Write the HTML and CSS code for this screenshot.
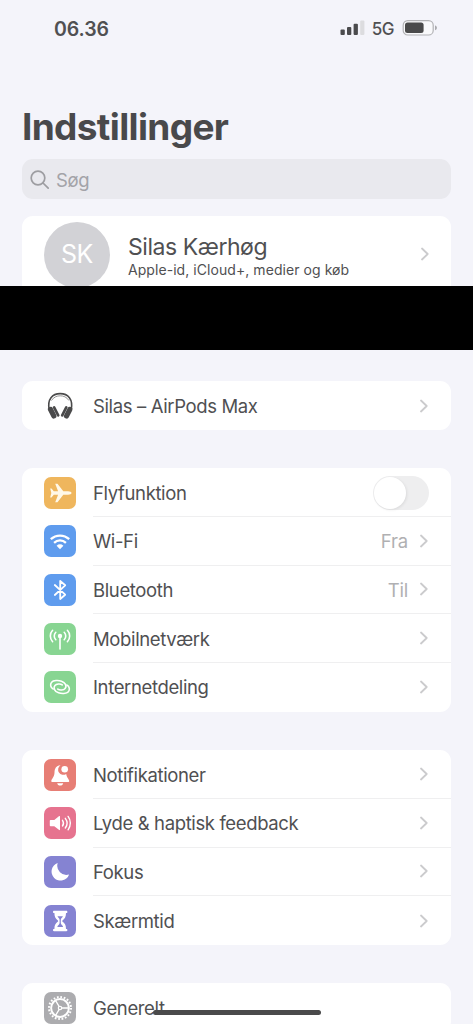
FILE: index.html
```html
<!DOCTYPE html>
<html lang="da">
<head>
<meta charset="utf-8">
<title>Indstillinger</title>
<link rel="stylesheet" href="styles.css">
</head>
<body>
<svg class="defs" width="0" height="0">
  <symbol id="chevron" viewBox="0 0 8 14"><path d="M1 1.500l5.700 5.500L1 12.500" fill="none" stroke="currentColor" stroke-width="1.800" stroke-linecap="round" stroke-linejoin="round"/></symbol>
</svg>
<div class="phone">
  <header class="status">
    <span class="time">06.36</span>
    <div class="indicators">
      <svg class="signal" viewBox="0 0 25 16" width="25" height="16">
        <g fill="#4b4b4d"><rect x="0.500" y="9.500" width="4.300" height="5.500" rx="1"/><rect x="7" y="7" width="4.300" height="8" rx="1"/><rect x="13.600" y="3.800" width="4.300" height="11.200" rx="1"/></g>
        <rect x="20.200" y="0.500" width="4.200" height="14.500" rx="1" fill="#dcdcdf"/>
      </svg>
      <span class="net">5G</span>
      <svg class="battery" viewBox="0 0 36 18" width="36" height="18">
        <rect x="1.200" y="1.600" width="30" height="14.400" rx="4.600" fill="#f9f9fb" stroke="#b2b2b5" stroke-width="1.200"/>
        <rect x="3" y="3.500" width="18.600" height="10.600" rx="2.500" fill="#4a4a4b"/>
        <path d="M33 6.400c1.400.4 1.900 1.200 1.900 2.400s-.5 2-1.900 2.400z" fill="#aaaaad"/>
      </svg>
    </div>
  </header>

  <h1 class="title">Indstillinger</h1>

  <div class="search">
    <svg viewBox="0 0 20 20" width="20" height="20" fill="none" stroke="#9d9da1" stroke-width="1.700" stroke-linecap="round"><circle cx="8" cy="8" r="6.800"/><path d="M13 13l5.200 5.200"/></svg>
    <span>Søg</span>
  </div>

  <section class="profile">
    <div class="avatar">SK</div>
    <div class="who">
      <div class="name">Silas Kærhøg</div>
      <div class="detail">Apple-id, iCloud+, medier og køb</div>
    </div>
    <svg class="chev"><use href="#chevron"/></svg>
  </section>
  <div class="redacted"></div>

  <section class="card airpods">
    <div class="row">
      <svg class="icon" viewBox="0 0 32 32">
        <path d="M5.200 20C3 9 8.500 3.600 16.200 3.600S29.400 9 27.200 20" fill="none" stroke="#4a4a4b" stroke-width="1.600"/>
        <path d="M7.500 10.500C9.700 7 13 5.800 16.200 5.800s6.500 1.200 8.700 4.700" fill="none" stroke="#888" stroke-width=".9"/>
        <g fill="#4a4a4b"><rect x="5.600" y="16.500" width="5.200" height="12.400" rx="2.400" transform="rotate(-27 8.200 22.700)"/><rect x="10.800" y="15.700" width="2.700" height="11.600" rx="1.300" transform="rotate(-27 12.100 21.500)"/><rect x="21.600" y="16.500" width="5.200" height="12.400" rx="2.400" transform="rotate(27 24.200 22.700)"/><rect x="18.900" y="15.700" width="2.700" height="11.600" rx="1.300" transform="rotate(27 20.300 21.500)"/></g>
      </svg>
      <div class="cell"><span class="label">Silas – AirPods Max</span><svg class="chev"><use href="#chevron"/></svg></div>
    </div>
  </section>

  <section class="card network">
    <div class="row">
      <svg class="icon orange" viewBox="0 0 32 32"><path d="M27.500 16c0-1-1.500-1.700-3.500-1.700h-4.700L13.500 6.700h-2.300l2.900 7.600H9.800L7.500 11.600H6.200L7.300 16 6.200 20.400h1.300l2.300-2.700h4.300l-2.900 7.600h2.300l5.800-7.600H24c2 0 3.500-.7 3.500-1.700z" fill="#fff8e8"/></svg>
      <div class="cell"><span class="label">Flyfunktion</span><span class="toggle"></span></div>
    </div>
    <div class="row">
      <svg class="icon blue" viewBox="0 0 32 32"><g fill="none" stroke="#fff" stroke-width="2.300"><path d="M6.800 14.200a13.400 13.400 0 0 1 18.400 0"/><path d="M10.100 17.800a8.600 8.600 0 0 1 11.800 0"/></g><path d="M16 24.200l-3.400-3.500a4.900 4.900 0 0 1 6.800 0z" fill="#fff"/></svg>
      <div class="cell"><span class="label">Wi-Fi</span><span class="value">Fra</span><svg class="chev"><use href="#chevron"/></svg></div>
    </div>
    <div class="row">
      <svg class="icon blue" viewBox="0 0 32 32"><path d="M10.800 11l10.400 9.700-5 4.300V7l5 4.300L10.800 21" fill="none" stroke="#fff" stroke-width="1.800" stroke-linejoin="round" stroke-linecap="round"/></svg>
      <div class="cell"><span class="label">Bluetooth</span><span class="value">Til</span><svg class="chev"><use href="#chevron"/></svg></div>
    </div>
    <div class="row">
      <svg class="icon green" viewBox="0 0 32 32"><g fill="none" stroke="#fff" stroke-width="1.600" stroke-linecap="round"><path d="M16 14v12"/><path d="M11.800 9.300a5.200 5.200 0 0 0 0 7.400M20.200 9.300a5.200 5.200 0 0 1 0 7.400M8.600 7.300a8.300 8.300 0 0 0 0 11.400M23.400 7.300a8.300 8.300 0 0 1 0 11.400"/></g><circle cx="16" cy="13" r="2.200" fill="#fff"/></svg>
      <div class="cell"><span class="label">Mobilnetværk</span><svg class="chev"><use href="#chevron"/></svg></div>
    </div>
    <div class="row">
      <svg class="icon green" viewBox="0 0 32 32"><g fill="none" stroke="#fff" stroke-width="1.600" stroke-linecap="round"><path d="M9.200 18C6.300 16.800 6 13 7.600 11.200 9.300 9.200 14.500 9.200 17.500 10.200c4 1.300 5.500 5 3.600 7.200-1.500 1.800-5.300 2.300-7.300.7"/><path d="M22.800 14c2.900 1.200 3.200 5 1.600 6.800-1.700 2-6.900 2-9.900 1-4-1.300-5.500-5-3.600-7.200 1.500-1.800 5.300-2.300 7.300-.7"/></g></svg>
      <div class="cell"><span class="label">Internetdeling</span><svg class="chev"><use href="#chevron"/></svg></div>
    </div>
  </section>

  <section class="card alerts">
    <div class="row">
      <svg class="icon red" viewBox="0 0 32 32"><path d="M16.500 6.200C12 6.600 10.600 9.700 10.500 13.500c-.1 4.500-2.800 6-3.200 8.500-.1.600.2.900.8.900h16.300c.6 0 .9-.3.800-.9-.4-2.300-2.500-3.300-3-7a5 5 0 0 1-5.700-8.800z" fill="#fff"/><path d="M13.200 24.200h6c-.3 1.500-1.500 2.400-3 2.400s-2.700-.9-3-2.400z" fill="#fff"/><circle cx="20.700" cy="10.200" r="3.300" fill="#fff"/></svg>
      <div class="cell"><span class="label">Notifikationer</span><svg class="chev"><use href="#chevron"/></svg></div>
    </div>
    <div class="row">
      <svg class="icon pink" viewBox="0 0 32 32"><path d="M6.800 13h3.500l4.900-3.900c.4-.3.800 0 .8.500v13c0 .5-.4.800-.8.500L10.300 19.300H6.800c-.6 0-1-.4-1-1V14c0-.6.400-1 1-1z" fill="#fff"/><g fill="none" stroke="#fff" stroke-width="1.400" stroke-linecap="round"><path d="M18.500 13.300a5 5 0 0 1 0 5.700"/><path d="M21.300 11.300a8 8 0 0 1 0 9.700"/><path d="M24.100 9.400a11.200 11.200 0 0 1 0 13.400"/></g></svg>
      <div class="cell"><span class="label">Lyde &amp; haptisk feedback</span><svg class="chev"><use href="#chevron"/></svg></div>
    </div>
    <div class="row">
      <svg class="icon purple" viewBox="0 0 32 32"><path d="M13.700 7a9 9 0 1 0 11.400 11.400A9.100 9.100 0 0 1 13.700 7z" fill="#fff"/></svg>
      <div class="cell"><span class="label">Fokus</span><svg class="chev"><use href="#chevron"/></svg></div>
    </div>
    <div class="row">
      <svg class="icon purple" viewBox="0 0 32 32"><path d="M10 5.800h12.400c.8 0 1 .6 1 1.200s-.3 1.100-1 1.100h-.4c0 4-1.200 5.700-3.300 7.200-.6.500-.6 1 0 1.500 2.100 1.500 3.300 3.200 3.300 7.200h.4c.7 0 1 .5 1 1.100s-.2 1.200-1 1.200H10c-.8 0-1-.6-1-1.200S9.300 24 10 24h.4c0-4 1.200-5.700 3.300-7.200.6-.5.600-1 0-1.500-2.100-1.500-3.300-3.200-3.300-7.200H10c-.7 0-1-.5-1-1.100s.2-1.200 1-1.200z" fill="#fff"/><path d="M13.500 11.300h5.400c-.5 1.500-2.100 2.200-2.100 3.500v3.200c0 1.500 2 2.200 2.300 4h-5.800c.3-1.800 2.300-2.500 2.300-4v-3.200c0-1.300-1.600-2-2.100-3.500z" fill="#8583d2"/></svg>
      <div class="cell"><span class="label">Skærmtid</span><svg class="chev"><use href="#chevron"/></svg></div>
    </div>
  </section>

  <section class="card general">
    <div class="row">
      <svg class="icon gray" viewBox="0 0 32 32"><g fill="none" stroke="#fff"><circle cx="16" cy="16" r="11" stroke-width="2" stroke-dasharray="1.730 1.726"/><circle cx="16" cy="16" r="8.900" stroke-width="2"/><path d="M17.500 16H25M15.200 14.700L11.500 8.300M15.200 17.300l-3.700 6.400" stroke-width="1.300"/><circle cx="16" cy="16" r="1.700" stroke-width="1.200"/></g></svg>
      <div class="cell"><span class="label">Generelt</span></div>
    </div>
  </section>
  <div class="home-bar"></div>
</div>
</body>
</html>
```

FILE: styles.css
```css
* { box-sizing: border-box; }
body { margin: 0; background: #f4f4fa; }
.defs { position: absolute; }
.phone {
  position: relative;
  width: 473px;
  height: 1024px;
  overflow: hidden;
  font-family: Inter, "Liberation Sans", sans-serif;
  color: #505052;
}
.status {
  display: flex;
  justify-content: space-between;
  height: 56px;
  padding: 0 35px 0 54px;
  align-items: center;
}
.time { padding-top: 1px; font-size: 19.500px; font-weight: 600; letter-spacing: -0.100px; }
.indicators { display: flex; align-items: center; }
.net { margin: 0 8px 0 7px; padding-top: 2px; font-size: 17px; font-weight: 500; letter-spacing: -0.500px; }
.title {
  margin: 47px 22px 0;
  height: 48px;
  line-height: 48px;
  font-size: 37px;
  font-weight: 700;
  letter-spacing: -0.650px;
  color: #49494b;
}
.search {
  display: flex;
  align-items: center;
  gap: 6px;
  height: 40px;
  margin: 8px 22px 17px;
  padding: 1px 8px 0;
  border-radius: 11px;
  background: #e9e9ee;
  color: #a3a3a8;
  font-size: 18.500px;
  letter-spacing: -0.400px;
}
.profile {
  display: flex;
  height: 70px;
  margin: 0 22px;
  padding: 0 22px;
  border-radius: 11px 11px 0 0;
  background: #fff;
  overflow: hidden;
}
.avatar {
  width: 66px;
  height: 66px;
  margin: 5.500px 18px 0 0;
  flex: none;
  border-radius: 50%;
  background: #d2d2d6;
  color: #fff;
  font-size: 25px;
  line-height: 65px;
  text-align: center;
  letter-spacing: -0.500px;
}
.who { flex: 1; padding-top: 15.500px; white-space: nowrap; }
.name { font-size: 23px; line-height: 30px; letter-spacing: -0.450px; }
.detail { font-size: 14px; line-height: 15px; letter-spacing: 0.060px; }
.profile .chev { margin-top: 31px; }
.redacted { height: 63.500px; background: #000; }
.chev { width: 8px; height: 14px; flex: none; color: #cbcbcd; overflow: visible; }
.card {
  margin: 0 22px;
  padding-left: 22px;
  border-radius: 11px;
  background: #fff;
  overflow: hidden;
}
.airpods { margin-top: 31.500px; }
.airpods .row { height: 49.300px; }
.network { margin-top: 38px; }
.alerts { margin-top: 38.900px; }
.general { margin-top: 38.500px; }
.row { display: flex; height: 48.650px; align-items: center; }
.icon { width: 32px; height: 32px; margin-right: 17px; flex: none; border-radius: 7px; }
.cell {
  display: flex;
  flex: 1;
  align-items: center;
  height: 100%;
  padding-right: 23px;
  border-bottom: 1px solid #efeff0;
}
.row:last-child .cell { border-bottom: 0; }
.label { flex: 1; padding-top: 1px; font-size: 18.500px; letter-spacing: -0.370px; white-space: nowrap; }
.row:last-child .label { padding-top: 0; }
.airpods .row:last-child .label { padding-top: 1px; }
.value { margin-right: 12px; padding-top: 1px; font-size: 18.500px; letter-spacing: -0.200px; color: #b0b0b2; }
.toggle {
  width: 56px;
  height: 34px;
  margin: 1px -1px 0 0;
  padding: 1px;
  border-radius: 17px;
  background: #eeeeef;
}
.toggle::before {
  content: "";
  display: block;
  width: 32px;
  height: 32px;
  border-radius: 50%;
  background: #fff;
  box-shadow: 1px 1px 3px rgba(0, 0, 0, 0.080);
}
.orange { background: #efb65d; }
.blue { background: #5f9cee; }
.green { background: #88d592; }
.red { background: #e77e75; }
.pink { background: #e6738f; }
.purple { background: #8583d2; }
.gray { background: #acacaf; }
.home-bar {
  position: absolute;
  left: 153px;
  top: 1009.500px;
  width: 168px;
  height: 5.500px;
  border-radius: 3px;
  background: #4a4a4b;
}
```
